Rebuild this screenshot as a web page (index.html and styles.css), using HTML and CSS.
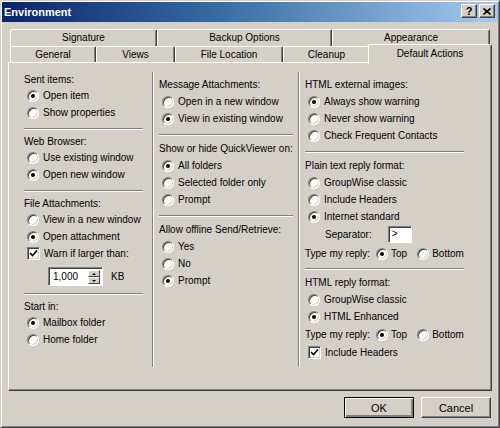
FILE: index.html
```html
<!DOCTYPE html>
<html lang="en">
<head>
    <meta charset="UTF-8">
    <title>Environment</title>
    <link rel="stylesheet" href="styles.css">
</head>
<body>
    <div class="window">
        <div class="title-bar">
            <span class="title-text">Environment</span>
            <div class="caption-buttons">
                <span class="caption-btn help-btn">?</span>
                <span class="caption-btn close-btn">
                    <svg width="8" height="7" viewBox="0 0 8 7">
                        <path d="M0.5 0.5L7.5 6.5M7.5 0.5L0.5 6.5" stroke="#000" stroke-width="1.6"/>
                    </svg>
                </span>
            </div>
        </div>

        <div class="dialog-body">
            <div class="tab-strip">
                <div class="tab-row tab-row-back">
                    <div class="tab tab-signature">Signature</div>
                    <div class="tab tab-backup">Backup Options</div>
                    <div class="tab tab-appearance">Appearance</div>
                </div>
                <div class="tab-row tab-row-front">
                    <div class="tab tab-general">General</div>
                    <div class="tab tab-views">Views</div>
                    <div class="tab tab-location">File Location</div>
                    <div class="tab tab-cleanup">Cleanup</div>
                    <div class="tab tab-actions active">Default Actions</div>
                </div>
            </div>

            <div class="tab-panel">
                <!-- left column -->
                <div class="column column-first">
                    <div class="group-label">Sent items:</div>
                    <div class="option"><span class="radio checked"></span>Open item</div>
                    <div class="option"><span class="radio"></span>Show properties</div>
                    <div class="rule"></div>

                    <div class="group-label">Web Browser:</div>
                    <div class="option"><span class="radio"></span>Use existing window</div>
                    <div class="option"><span class="radio checked"></span>Open new window</div>
                    <div class="rule"></div>

                    <div class="group-label">File Attachments:</div>
                    <div class="option"><span class="radio"></span>View in a new window</div>
                    <div class="option"><span class="radio checked"></span>Open attachment</div>
                    <div class="option">
                        <span class="checkbox">
                            <svg width="9" height="9" viewBox="0 0 9 9">
                                <path d="M1 4L3.5 6.5L8 1.5" fill="none" stroke="#000" stroke-width="1.7"/>
                            </svg>
                        </span>Warn if larger than:
                    </div>
                    <div class="spin-row">
                        <div class="spin-box">
                            <span class="spin-field">1,000</span>
                            <span class="spin-buttons">
                                <span class="spin-btn"><span class="arrow-up"></span></span>
                                <span class="spin-btn"><span class="arrow-down"></span></span>
                            </span>
                        </div>
                        <span>KB</span>
                    </div>
                    <div class="rule"></div>

                    <div class="group-label">Start in:</div>
                    <div class="option"><span class="radio checked"></span>Mailbox folder</div>
                    <div class="option"><span class="radio"></span>Home folder</div>
                </div>

                <!-- middle column -->
                <div class="column column-middle">
                    <div class="group-label">Message Attachments:</div>
                    <div class="option"><span class="radio"></span>Open in a new window</div>
                    <div class="option"><span class="radio checked"></span>View in existing window</div>
                    <div class="rule"></div>

                    <div class="group-label">Show or hide QuickViewer on:</div>
                    <div class="option"><span class="radio checked"></span>All folders</div>
                    <div class="option"><span class="radio"></span>Selected folder only</div>
                    <div class="option"><span class="radio"></span>Prompt</div>
                    <div class="rule"></div>

                    <div class="group-label">Allow offline Send/Retrieve:</div>
                    <div class="option"><span class="radio"></span>Yes</div>
                    <div class="option"><span class="radio"></span>No</div>
                    <div class="option"><span class="radio checked"></span>Prompt</div>
                </div>

                <!-- right column -->
                <div class="column column-last">
                    <div class="group-label">HTML external images:</div>
                    <div class="option"><span class="radio checked"></span>Always show warning</div>
                    <div class="option"><span class="radio"></span>Never show warning</div>
                    <div class="option"><span class="radio"></span>Check Frequent Contacts</div>
                    <div class="rule"></div>

                    <div class="group-label">Plain text reply format:</div>
                    <div class="option"><span class="radio"></span>GroupWise classic</div>
                    <div class="option"><span class="radio"></span>Include Headers</div>
                    <div class="option"><span class="radio checked"></span>Internet standard</div>
                    <div class="separator-row">
                        <span>Separator:</span>
                        <span class="text-input">&gt;</span>
                    </div>
                    <div class="reply-row">
                        <span>Type my reply:</span>
                        <span class="inline-option first"><span class="radio checked"></span>Top</span>
                        <span class="inline-option"><span class="radio"></span>Bottom</span>
                    </div>
                    <div class="rule rule-tight"></div>

                    <div class="group-label">HTML reply format:</div>
                    <div class="option"><span class="radio"></span>GroupWise classic</div>
                    <div class="option"><span class="radio checked"></span>HTML Enhanced</div>
                    <div class="reply-row">
                        <span>Type my reply:</span>
                        <span class="inline-option first"><span class="radio checked"></span>Top</span>
                        <span class="inline-option"><span class="radio"></span>Bottom</span>
                    </div>
                    <div class="option">
                        <span class="checkbox">
                            <svg width="9" height="9" viewBox="0 0 9 9">
                                <path d="M1 4L3.5 6.5L8 1.5" fill="none" stroke="#000" stroke-width="1.7"/>
                            </svg>
                        </span>Include Headers
                    </div>
                </div>
            </div>

            <div class="dialog-buttons">
                <button class="push-btn default-btn">OK</button>
                <button class="push-btn">Cancel</button>
            </div>
        </div>
    </div>
</body>
</html>
```

FILE: styles.css
```css
* {
    margin: 0;
    padding: 0;
    box-sizing: border-box;
}

body {
    font-family: "Liberation Sans", Arial, sans-serif;
    font-size: 10px;
    color: #000;
    background: #d4d0c8;
}

.window {
    width: 500px;
    height: 428px;
    background: #d4d0c8;
    border: 1px solid;
    border-color: #d4d0c8 #404040 #404040 #d4d0c8;
    box-shadow: inset 1px 1px 0 #fff, inset -1px -1px 0 #808080;
    padding: 1px;
}

/* title bar */
.title-bar {
    height: 20px;
    display: flex;
    justify-content: space-between;
    align-items: flex-start;
    padding: 0 3px 0 2px;
    background: linear-gradient(90deg, #0a246a 0%, #3a6ea5 45%, #a6caf0 100%);
}

.title-text {
    color: #fff;
    font-weight: bold;
    font-size: 11px;
    line-height: 20px;
}

.caption-buttons {
    display: flex;
    gap: 2px;
    margin-top: 2px;
}

.caption-btn {
    width: 16px;
    height: 14px;
    display: flex;
    align-items: center;
    justify-content: center;
    background: #d4d0c8;
    border: 1px solid;
    border-color: #fff #404040 #404040 #fff;
    box-shadow: inset -1px -1px 0 #808080;
}

.help-btn {
    font-weight: bold;
    font-size: 11px;
    line-height: 1;
}

/* body */
.dialog-body {
    padding: 7px 6px 0 6px;
}

.tab-strip {
    margin: 0 2px;
}

.tab-row {
    display: flex;
    align-items: flex-end;
}

.tab-row-back {
    height: 17px;
}

.tab-row-front {
    height: 16px;
}

.tab {
    flex: 0 0 auto;
    text-align: center;
    white-space: nowrap;
    background: #d4d0c8;
    border-top: 1px solid #fff;
    border-left: 1px solid #fff;
    border-right: 1px solid #404040;
    box-shadow: inset -1px 0 0 #808080;
    border-radius: 2px 2px 0 0;
}

.tab-signature { width: 147px; }
.tab-backup { width: 175px; }
.tab-appearance { width: 158px; }
.tab-general { width: 86px; }
.tab-views { width: 79px; }
.tab-location { width: 108px; }
.tab-cleanup { width: 87px; }
.tab-actions { width: 124px; }

.tab-row-back .tab {
    height: 17px;
    line-height: 16px;
}

.tab-row-front .tab {
    height: 16px;
    line-height: 15px;
}

.tab-row-front .tab.active {
    position: relative;
    z-index: 1;
    height: 20px;
    line-height: 17px;
    margin: -2px -2px -2px;
}

.tab-panel {
    height: 329px;
    display: grid;
    grid-template-columns: 144px 146px 1fr;
    align-items: start;
    padding-top: 9px;
    border: 1px solid;
    border-color: #fff #404040 #404040 #fff;
    box-shadow: inset -1px -1px 0 #808080;
}

.column {
    height: 295px;
}

.column-first {
    padding: 0 9px 0 15px;
    border-right: 1px solid #808080;
}

.column-middle {
    padding: 4px 5px 0 5px;
    border-left: 1px solid #fff;
    border-right: 1px solid #808080;
}

.column-last {
    padding: 4px 53px 0 5px;
    border-left: 1px solid #fff;
}

.group-label {
    height: 17px;
    line-height: 17px;
    white-space: nowrap;
}

.column-first .group-label {
    height: 15px;
    line-height: 15px;
}

.option {
    height: 17px;
    display: flex;
    align-items: center;
    gap: 4px;
    padding-left: 3px;
    white-space: nowrap;
}

.rule {
    height: 2px;
    border-top: 1px solid #808080;
    border-bottom: 1px solid #fff;
    margin: 7px 0 4px;
}

.rule-tight {
    margin-top: 5px;
}

.radio {
    flex: none;
    position: relative;
    width: 12px;
    height: 12px;
    border-radius: 50%;
    background: #fff;
    border: 1px solid;
    border-color: #808080 #fff #fff #808080;
    box-shadow: inset 1px 1px 0 #404040, inset -1px -1px 0 #d4d0c8;
}

.radio.checked::after {
    content: '';
    position: absolute;
    left: 3px;
    top: 3px;
    width: 4px;
    height: 4px;
    border-radius: 50%;
    background: #000;
}

.checkbox {
    flex: none;
    width: 13px;
    height: 13px;
    display: flex;
    align-items: center;
    justify-content: center;
    background: #fff;
    border: 1px solid;
    border-color: #808080 #fff #fff #808080;
    box-shadow: inset 1px 1px 0 #404040, inset -1px -1px 0 #d4d0c8;
}

/* spin box */
.spin-row {
    display: flex;
    align-items: center;
    gap: 8px;
    height: 19px;
    margin-top: 5px;
    padding-left: 24px;
}

.spin-box {
    width: 55px;
    height: 19px;
    display: flex;
    background: #fff;
    border: 1px solid;
    border-color: #808080 #fff #fff #808080;
    box-shadow: inset 1px 1px 0 #404040;
    padding: 2px 2px 1px 1px;
}

.spin-field {
    flex: 1;
    padding-left: 3px;
    line-height: 14px;
}

.spin-buttons {
    width: 12px;
    display: flex;
    flex-direction: column;
}

.spin-btn {
    flex: 1;
    display: flex;
    align-items: center;
    justify-content: center;
    background: #d4d0c8;
    border: 1px solid;
    border-color: #fff #404040 #404040 #fff;
}

.arrow-up {
    border-left: 2px solid transparent;
    border-right: 2px solid transparent;
    border-bottom: 2px solid #000;
}

.arrow-down {
    border-left: 2px solid transparent;
    border-right: 2px solid transparent;
    border-top: 2px solid #000;
}

/* plain text reply rows */
.separator-row {
    height: 19px;
    display: flex;
    align-items: center;
    gap: 16px;
    padding-left: 20px;
}

.text-input {
    width: 24px;
    height: 17px;
    line-height: 14px;
    padding-left: 3px;
    background: #fff;
    border: 1px solid;
    border-color: #808080 #fff #fff #808080;
    box-shadow: inset 1px 1px 0 #404040;
}

.reply-row {
    height: 19px;
    display: flex;
    align-items: center;
    white-space: nowrap;
}

.inline-option {
    display: flex;
    align-items: center;
    gap: 3px;
    margin-left: 10px;
}

.inline-option.first {
    margin-left: 6px;
}

/* OK / Cancel */
.dialog-buttons {
    display: flex;
    justify-content: flex-end;
    gap: 7px;
    margin-top: 6px;
    padding-right: 1px;
}

.push-btn {
    width: 70px;
    height: 21px;
    font-family: inherit;
    font-size: 11px;
    color: #000;
    background: #d4d0c8;
    border: 1px solid;
    border-color: #fff #404040 #404040 #fff;
    box-shadow: inset -1px -1px 0 #808080;
}

.default-btn {
    border: 1px solid #000;
    box-shadow: inset 1px 1px 0 #fff, inset -2px -2px 0 #808080, inset -1px -1px 0 #404040;
}
```
